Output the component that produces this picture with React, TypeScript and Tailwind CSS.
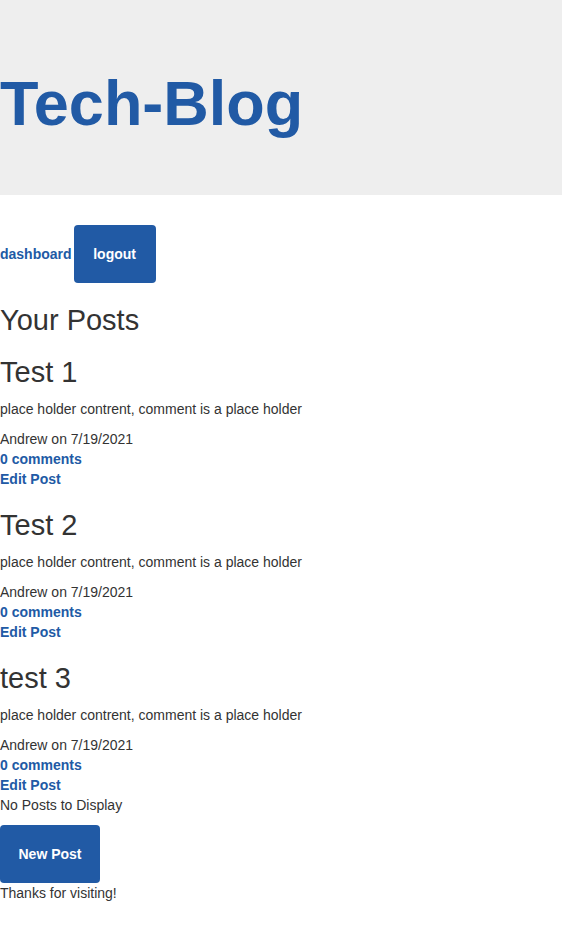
export default function App() {
  const posts = [
    { title: "Test 1" },
    { title: "Test 2" },
    { title: "test 3" },
  ];

  return (
    <div className="min-h-screen bg-white text-[#333] font-['Liberation_Sans',Arial,sans-serif] text-[14px] leading-[20px]">
      <header className="h-[195px] bg-[#eeeeee] flex items-center">
        <h1 className="text-[63px] leading-none font-bold text-[#215aa5] mt-[12px]">
          Tech-Blog
        </h1>
      </header>

      <nav className="mt-[30px] flex items-center gap-[2px]">
        <a href="#" className="font-bold text-[#215aa5]">
          dashboard
        </a>
        <button className="w-[82px] h-[58px] rounded-[4px] bg-[#215aa5] text-white font-bold">
          logout
        </button>
      </nav>

      <main>
        <h2 className="mt-[19px] text-[29px] leading-[36px]">Your Posts</h2>

        {posts.map((p, i) => (
          <div key={p.title} className={i === 0 ? "mt-[16px]" : "mt-[18px]"}>
            <h3 className="text-[29px] leading-[36px]">{p.title}</h3>
            <p className="mt-[9px]">place holder contrent, comment is a place holder</p>
            <p className="mt-[10px]">Andrew on 7/19/2021</p>
            <a href="#" className="block font-bold text-[#215aa5]">
              0 comments
            </a>
            <a href="#" className="block font-bold text-[#215aa5]">
              Edit Post
            </a>
          </div>
        ))}

        <p>No Posts to Display</p>
        <button className="mt-[10px] w-[100px] h-[58px] rounded-[4px] bg-[#215aa5] text-white font-bold">
          New Post
        </button>
      </main>

      <footer>Thanks for visiting!</footer>
    </div>
  );
}
